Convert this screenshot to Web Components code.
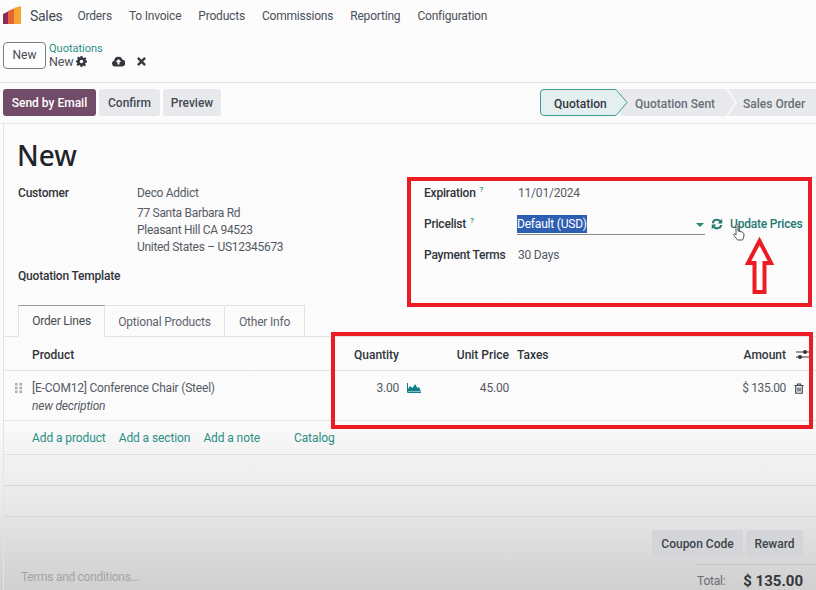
<!DOCTYPE html>
<html lang="en">
<head>
<meta charset="utf-8">
<title>Sales</title>
<style>
html,body{margin:0;height:590px;overflow:hidden}
body{font:12px/16px Roboto,"Noto Sans",sans-serif;letter-spacing:-.2px;color:#555a62;background:linear-gradient(#fcfcfd 0,#fbfbfc 420px,#f1f1f2 460px,#e9e9ea 505px,#dcdcdc 545px,#d0d0d0 590px)}
</style>
</head>
<body>
<sale-navbar></sale-navbar>
<sale-control></sale-control>
<sale-status></sale-status>
<sale-sheet>
  <sale-form></sale-form>
  <sale-tabs></sale-tabs>
  <sale-lines></sale-lines>
  <sale-footer></sale-footer>
</sale-sheet>
<sale-marks></sale-marks>

<script>
const define = (name, html) => customElements.define(name, class extends HTMLElement {
  constructor() {
    super()
    this.attachShadow({mode: "open"}).innerHTML = html
  }
})

define("sale-navbar", `
<style>
:host{display:flex;align-items:center;height:32px;padding-left:3px;box-sizing:border-box}
svg{display:block;width:18px;height:18px;margin-top:-2px}
b{font-weight:400;font-size:14px;letter-spacing:-.3px;color:#454a52;margin:0 15px 0 9px}
nav{display:flex;gap:17px;color:#4b5058;letter-spacing:-.2px}
</style>
<svg viewBox="0 0 18 18">
  <path fill="#f6a531" d="M11 2L18 0V18H11z"/>
  <path fill="#e8643a" d="M5 5L11 2.500V18H5z"/>
  <path fill="#8e2c56" d="M0 8L5 5.500V18H0z"/>
</svg>
<b>Sales</b>
<nav><span>Orders</span><span>To Invoice</span><span>Products</span><span>Commissions</span><span>Reporting</span><span>Configuration</span></nav>
`)

define("sale-control", `
<style>
:host{display:flex;align-items:center;height:51px;padding:0 0 4px 3px;box-sizing:border-box;border-bottom:1px solid #e3e4e6}
button{font:inherit;letter-spacing:0;color:#454a52;background:#fff;border:1px solid #7b7f85;border-radius:4px;width:43px;height:27px;padding:0}
.crumb{margin-left:3px;line-height:13px}
.crumb a{display:block;font-size:11px;letter-spacing:0;color:#2a8f84}
.crumb span{display:flex;align-items:center;gap:3px;color:#4b5058;font-size:12.500px}
.acts{display:flex;align-items:center;gap:12px;margin:13px 0 0 9px}
svg{display:block}
</style>
<button>New</button>
<div class="crumb"><a>Quotations</a><span>New
  <svg width="11" height="11" viewBox="0 0 24 24"><path fill="#33373d" fill-rule="evenodd" d="M10 0h4l.7 3.300 2.300 1 2.900-1.800 2.800 2.800-1.800 2.900 1 2.300L24 10v4l-3.100.7-1 2.300 1.800 2.900-2.800 2.800-2.900-1.800-2.300 1L14 24h-4l-.7-3.100-2.300-1-2.900 1.800-2.800-2.800L3 16l-1-2.300L0 14v-4l3.100-.7 1-2.300L2.300 4.100l2.800-2.800L8 3.100l1.300-.4zM12 8a4 4 0 1 0 0 8 4 4 0 0 0 0-8z"/></svg>
</span></div>
<div class="acts">
  <svg width="13" height="11" viewBox="0 0 26 20"><path fill="#33373d" fill-rule="evenodd" d="M6 20a6 6 0 0 1-1.500-11.800A8.500 8.500 0 0 1 21 6.500 6.800 6.800 0 0 1 20 20zM13 5l-5.500 6H11v5h4v-5h3.500z"/></svg>
  <svg width="9" height="9" viewBox="0 0 10 10"><path stroke="#33373d" stroke-width="2.600" d="M1 1l8 8M9 1l-8 8"/></svg>
</div>
`)

define("sale-status", `
<style>
:host{display:flex;align-items:center;height:41px;padding:0 0 2px 3px;box-sizing:border-box;border-bottom:1px solid #e3e4e6}
button{font:inherit;font-weight:500;letter-spacing:0;height:27px;border:0;border-radius:3px;padding:1px 0 0;margin-right:3px;background:#e7e9ec;color:#454a52}
.send{width:93px;background:#714b67;color:#fff;margin-right:3px}
.conf{width:61px}.prev{width:58px}
.bar{margin-left:auto;display:block;width:276px;height:27px;letter-spacing:0}
</style>
<button class="send">Send by Email</button>
<button class="conf">Confirm</button>
<button class="prev">Preview</button>
<svg class="bar" viewBox="0 0 276 27" font-size="12" font-weight="500">
  <path fill="#e7e9ec" d="M80 0h196v27H80z"/>
  <path fill="none" stroke="#fbfbfc" stroke-width="1.500" d="M187 0l9 13.500-9 13.500"/>
  <path fill="#e3f0ef" stroke="#3d9b90" d="M4 .5h72l11 13-11 13H4a3.500 3.500 0 0 1-3.500-3.500V4A3.500 3.500 0 0 1 4 .5z"/>
  <text x="14" y="18.500" fill="#33373d">Quotation</text>
  <text x="95" y="18.500" fill="#6a6f77">Quotation Sent</text>
  <text x="203" y="18.500" fill="#6a6f77">Sales Order</text>
</svg>
`)

define("sale-sheet", `
<style>
:host{display:block;margin-left:3px;border-left:1px solid #e2e3e5}
</style>
<slot></slot>
`)

define("sale-form", `
<style>
:host{display:grid;grid-template-columns:406px 1fr;padding:13px 0 0 14px;height:181px;box-sizing:border-box;grid-template-rows:37px 1fr}
h1{grid-column:1/3;margin:0 0 0 -1px;font-size:28px;font-weight:500;line-height:37px;letter-spacing:0;color:#1f2329;font-family:"Noto Sans",sans-serif}
label{color:#30343a;font-weight:500}
.cust{display:grid;grid-template-columns:119px 1fr;padding-top:11px;align-content:start}
.addr{line-height:17px;letter-spacing:-.3px}
.addr div:first-child{margin-bottom:3px}
.tpl{grid-column:1/3;margin-top:12px}
.right{display:grid;grid-template-columns:94px 1fr;grid-auto-rows:31px;padding-top:10px;margin-right:13px}
.right>*{align-self:start;padding-top:1px}
sup{font-size:8px;line-height:0;color:#2a8f84;margin-left:1px}
.price{display:flex;align-items:flex-start;padding-top:0}
.sel{display:flex;width:188px;margin-left:-1px;height:20px;border-bottom:1px solid #8a8e94;box-sizing:border-box;justify-content:space-between}
.sel mark{background:#2f5fb3;color:#fff;height:18px;line-height:18px}
.sel i{margin:8px 1px 0 0;border:4px solid transparent;border-top-color:#26867b;border-bottom:0;height:0}
.ref{margin:2px 0 0 5px;display:block}
.up{margin-left:6px;padding-top:1px;color:#26796f;white-space:nowrap;font-weight:500}
</style>
<h1>New</h1>
<div class="cust">
  <label>Customer</label>
  <div class="addr"><div>Deco Addict</div><div>77 Santa Barbara Rd</div><div>Pleasant Hill CA 94523</div><div>United States – US12345673</div></div>
  <label class="tpl">Quotation Template</label>
</div>
<div class="right">
  <label>Expiration <sup>?</sup></label><span>11/01/2024</span>
  <label>Pricelist <sup>?</sup></label>
  <div class="price">
    <div class="sel"><mark>Default (USD)</mark><i></i></div>
    <svg class="ref" width="14" height="14" viewBox="0 0 24 24"><path fill="#26796f" d="M12 3a9 9 0 0 1 6.400 2.600L21 3v8h-8l3-3a5.700 5.700 0 0 0-9.500 2.500H3A9 9 0 0 1 12 3zM3 13h8l-3 3a5.700 5.700 0 0 0 9.500-2.500H21A9 9 0 0 1 5.600 18.400L3 21z"/></svg>
    <span class="up">Update Prices</span>
  </div>
  <label>Payment Terms</label><span>30 Days</span>
</div>
`)

define("sale-tabs", `
<style>
:host{display:flex;padding-left:14px;height:32px;box-sizing:border-box;border-bottom:1px solid #e1e2e4;color:#5f646c}
span{display:flex;align-items:center;justify-content:center;height:32px;box-sizing:border-box;border:1px solid #e1e2e4;border-left:0;border-bottom:0}
.on{width:87px;border-left:1px solid #e1e2e4;border-top-color:#9a9ea3;border-bottom:1px solid #fbfbfc;color:#454a52}
.b{width:120px}.c{width:80px}
</style>
<span class="on">Order Lines</span><span class="b">Optional Products</span><span class="c">Other Info</span>
`)

define("sale-lines", `
<style>
:host{display:block}
.row{display:grid;grid-template-columns:28px 298px 69px 28px 82px 1fr 81px 30px;border-bottom:1px solid #e3e4e6;box-sizing:border-box;align-items:center}
.head{height:34px;padding-top:2px;font-weight:500;letter-spacing:0;color:#30343a}
.line{height:50px;align-items:start;padding-top:9px;color:#555a62}
.r{text-align:right}
.line .r:last-of-type{letter-spacing:-.35px}
.taxes{padding-left:8px}
em{display:block;margin-top:2px}
svg{display:block}
.h{margin:3px 0 0 11px}
.add{height:34px;padding-top:1px;display:flex;align-items:center;padding-left:28px;color:#2a8f84;letter-spacing:-.1px;border-bottom:1px solid #e0e0e1;box-sizing:border-box}
.add span{margin-right:13px}
.add .cat{margin-left:21px}
.blank{height:31px;border-bottom:1px solid #d6d6d7;box-sizing:border-box}
</style>
<div class="row head">
  <span></span><span>Product</span><span class="r">Quantity</span><span></span>
  <span class="r">Unit Price</span><span class="taxes">Taxes</span><span class="r">Amount</span>
  <svg style="margin-left:10px" width="13" height="11" viewBox="0 0 13 11"><path stroke="#33373d" d="M0 3h13M0 8h13"/><circle cx="9" cy="3" r="2" fill="#33373d"/><circle cx="4" cy="8" r="2" fill="#33373d"/></svg>
</div>
<div class="row line">
  <svg class="h" width="7" height="10" viewBox="0 0 7 10" fill="#a9adb2"><path d="M0 0h2.500v2.500H0zM4.500 0H7v2.500H4.500zM0 3.800h2.500v2.500H0zM4.500 3.800H7v2.500H4.500zM0 7.500h2.500V10H0zM4.500 7.500H7V10H4.500z"/></svg>
  <div>[E-COM12] Conference Chair (Steel)<em>new decription</em></div>
  <span class="r">3.00</span>
  <svg style="margin:3px 0 0 8px" width="14" height="10" viewBox="0 0 14 10"><path fill="#12808a" d="M1 8.500V6l2-3 2.500 2L8 1l2.500 4 1.500-1 2 4.500z"/><path stroke="#12808a" fill="none" d="M.5 0v9.500H14"/></svg>
  <span class="r">45.00</span><span></span>
  <span class="r">$ 135.00</span>
  <svg style="margin:3px 0 0 8px" width="10" height="11" viewBox="0 0 20 22"><path fill="none" stroke="#3f444b" stroke-width="2.400" d="M1 5h18M7 5V2h6v3M3.500 5v15.500h13V5M8 9v8M12 9v8"/></svg>
</div>
<div class="add"><span>Add a product</span><span>Add a section</span><span>Add a note</span><span class="cat">Catalog</span></div>
<div class="blank"></div>
<div class="blank"></div>
`)

define("sale-footer", `
<style>
:host{display:block;height:73px}
.btns{display:flex;justify-content:flex-end;gap:3px;padding:13px 13px 0 0}
button{font:inherit;font-weight:500;letter-spacing:0;height:27px;border:0;border-radius:3px;background:#d3d5d8;color:#3f444b;padding:1px 0 0}
.a{width:91px}.b{width:57px}
.low{display:flex;justify-content:space-between;margin-top:7px}
.terms{color:#a4a4a4;letter-spacing:-.3px;padding:5px 0 0 17px}
.total{border-top:1px solid #c6c6c7;display:flex;box-sizing:border-box;padding:8px 13px 0 0;justify-content:space-between;width:120px}
.total span{color:#6a6d72;margin-left:1px}
.total b{font-size:15px;letter-spacing:0;color:#33373d}
</style>
<div class="btns"><button class="a">Coupon Code</button><button class="b">Reward</button></div>
<div class="low"><span class="terms">Terms and conditions...</span><div class="total"><span>Total:</span><b>$ 135.00</b></div></div>
`)

define("sale-marks", `
<style>
:host{position:absolute;inset:0;pointer-events:none}
i{position:absolute;border:4px solid #ed1c24;box-sizing:border-box}
.one{left:407px;top:177px;width:405px;height:130px}
.two{left:331px;top:332px;width:482px;height:97px}
svg{position:absolute}
</style>
<i class="one"></i><i class="two"></i>
<svg style="left:745px;top:237px" width="30" height="58" viewBox="0 0 30 58"><path fill="#fff" stroke="#ed1c24" stroke-width="4" d="M14.500 4L26 26H19.500V55H9.500V26H3z"/></svg>
<svg style="left:732px;top:223px" width="13" height="18" viewBox="0 0 13 18"><path fill="#fff" stroke="#555" d="M4 1.500c1-.8 2 0 2 1V8l4 1c1.500.5 2 1.500 2 3l-.5 3-1 2h-5L2 12.500c-.8-1 0-2.300 1.200-1.500L4 12z"/></svg>
`)
</script>
</body>
</html>
